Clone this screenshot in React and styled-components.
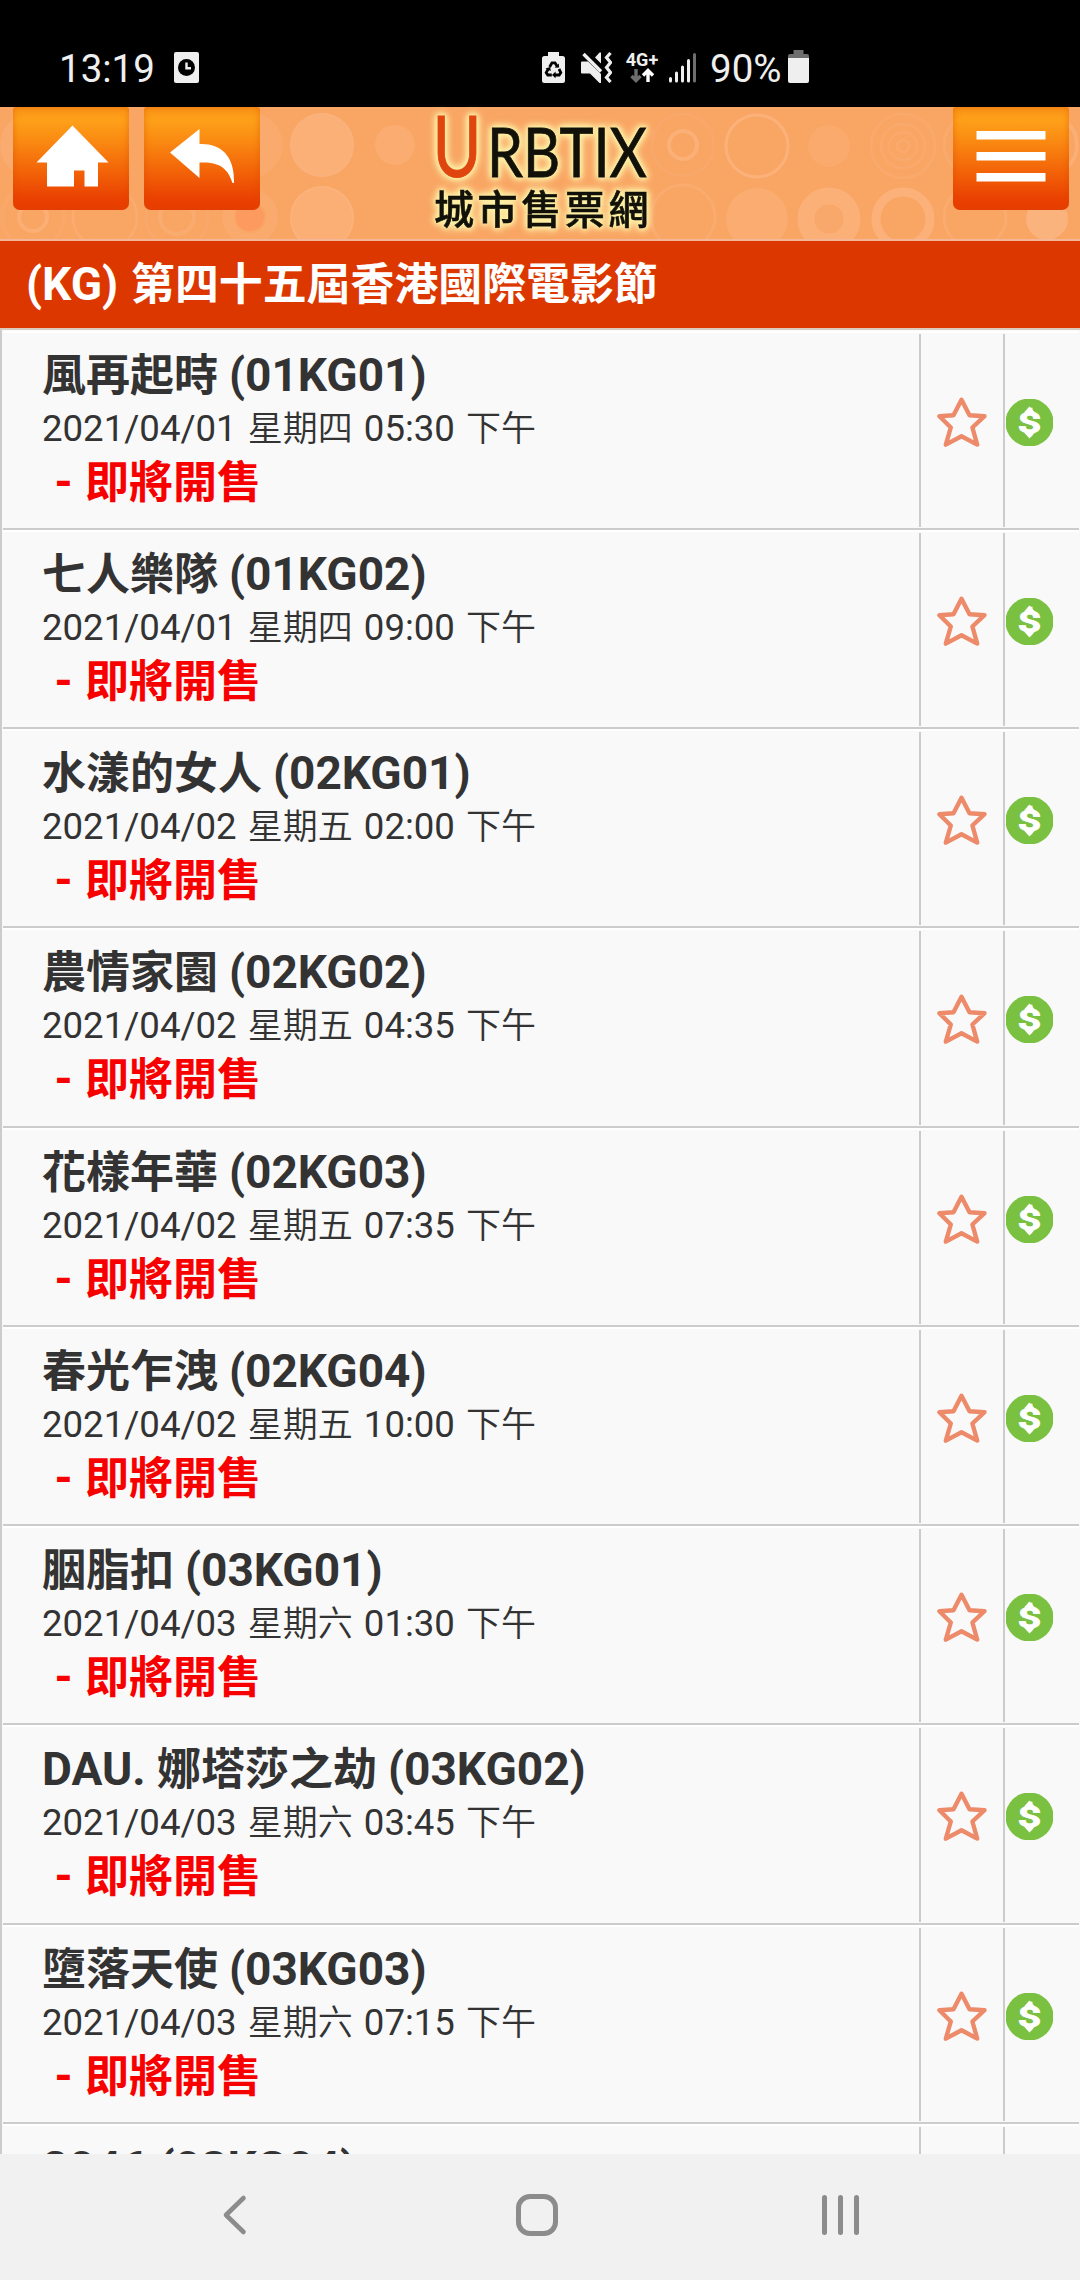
import React from 'react';
import styled, { createGlobalStyle } from 'styled-components';

const GlobalStyle = createGlobalStyle`
  * {
    box-sizing: border-box;
  }

  body {
    margin: 0;
    background: #f9f9f9;
    font-family: Roboto, "Noto Sans CJK TC", sans-serif;
  }
`;

const Screen = styled.div`
  display: flex;
  flex-direction: column;
  width: 1080px;
  height: 2280px;
  overflow: hidden;
  color: #333;
`;

const StatusBar = styled.div`
  display: flex;
  flex: none;
  align-items: flex-end;
  height: 107px;
  padding: 0 271px 24px 59px;
  background: #000;
  color: #efefef;

  svg {
    flex: none;
    display: block;
  }
`;

const StatusText = styled.span`
  font-size: 38.5px;
  line-height: 29px;
  white-space: nowrap;
  width: ${(props) => props.$width}px;
`;

const StatusIcons = styled.div`
  display: flex;
  align-items: flex-end;
  margin-left: auto;
`;

const NetworkType = styled.div`
  display: flex;
  flex-direction: column;
  align-items: center;
  width: 34px;
  margin: 0 10px 0 13px;
  font-size: 18px;
  font-weight: 700;
  line-height: 17px;
`;

const Header = styled.header`
  position: relative;
  display: flex;
  flex: none;
  align-items: flex-start;
  height: 134px;
  padding: 0 11px 0 13px;
  background: #f9a563;
  border-bottom: 2px solid #f3b698;
`;

const Pattern = styled.svg`
  position: absolute;
  left: 0;
  top: 0;
`;

const HeaderButton = styled.button`
  position: relative;
  width: 116px;
  height: 103px;
  margin: 0 15px 0 0;
  padding: 0;
  border: 0;
  border-radius: 3px 3px 7px 7px;
  background: linear-gradient(#fb9517 0%, #fea019 13%, #fa8a12 33%, #f36408 62%, #ea4202 88%, #e83c00 100%);
  box-shadow: inset 0 0 7px rgba(214, 70, 0, 0.45);

  &:last-child {
    margin: 0;
  }

  svg {
    display: block;
  }
`;

const Logo = styled.svg`
  position: relative;
  margin: 0 auto 0 133px;
  filter: drop-shadow(0 0 2px #fdf0a4) drop-shadow(0 0 3px #fdf0a4) drop-shadow(0 0 3px #fbe6a0);
`;

const PageTitle = styled.h1`
  flex: none;
  height: 89px;
  margin: 0;
  padding-left: 26px;
  border-bottom: 2px solid #dccabd;
  background: #dd3700;
  color: #fff;
  font-size: 43.9px;
  font-weight: 700;
  line-height: 86px;
  word-spacing: 2px;
`;

const List = styled.div`
  flex: 1;
  overflow: hidden;
  padding: 0.5px 1px 0 1px;
  border-left: 2px solid #ccc;
  background: #f9f9f9;
`;

const Row = styled.div`
  display: flex;
  height: 199.25px;
  padding: 1px 0;
  border-top: 2px solid #fff;
  border-bottom: 2px solid #ccc;
`;

const Details = styled.div`
  width: 916px;
  padding: 16px 0 0 39px;
`;

const Title = styled.h2`
  height: 51px;
  margin: 0;
  font-size: 44px;
  font-weight: 700;
  line-height: 51px;
  white-space: nowrap;
`;

// latin text runs a little larger than the chinese beside it
const Latin = styled.span`
  font-size: 46px;
`;

const ShowTime = styled.div`
  height: 50px;
  font-size: 36.6px;
  font-weight: 400;
  line-height: 50px;
  word-spacing: 2px;
  white-space: nowrap;
`;

const Light = styled.span`
  font-family: "Noto Sans CJK TC DemiLight", "Noto Sans CJK TC", sans-serif;
  font-size: 35px;
  font-weight: 350;
`;

const SaleStatus = styled.div`
  padding-left: 12.5px;
  color: #f80000;
  font-size: 44px;
  font-weight: 700;
  line-height: 62px;
  word-spacing: 1px;
`;

const IconCell = styled.div`
  width: ${(props) => props.$width}px;
  padding: ${(props) => props.$pad};
  border-left: 2px solid #ccc;

  svg {
    display: block;
  }
`;

const NavBar = styled.nav`
  display: flex;
  flex: none;
  align-items: center;
  justify-content: space-between;
  height: 126px;
  padding: 0 218px 4px 219px;
  background: #f1f1f1;

  svg {
    display: block;
  }
`;

const shows = [
  { name: '風再起時', code: '01KG01', date: '2021/04/01', day: '星期四', time: '05:30' },
  { name: '七人樂隊', code: '01KG02', date: '2021/04/01', day: '星期四', time: '09:00' },
  { name: '水漾的女人', code: '02KG01', date: '2021/04/02', day: '星期五', time: '02:00' },
  { name: '農情家園', code: '02KG02', date: '2021/04/02', day: '星期五', time: '04:35' },
  { name: '花樣年華', code: '02KG03', date: '2021/04/02', day: '星期五', time: '07:35' },
  { name: '春光乍洩', code: '02KG04', date: '2021/04/02', day: '星期五', time: '10:00' },
  { name: '胭脂扣', code: '03KG01', date: '2021/04/03', day: '星期六', time: '01:30' },
  { latin: 'DAU. ', name: '娜塔莎之劫', code: '03KG02', date: '2021/04/03', day: '星期六', time: '03:45' },
  { name: '墮落天使', code: '03KG03', date: '2021/04/03', day: '星期六', time: '07:15' },
  { latin: '2046', name: '', code: '03KG04' },
];

const HeaderPattern = () => (
  <Pattern width="1080" height="132" viewBox="0 0 1080 132" fill="none" stroke="#fcb582" strokeWidth="3">
    <g fill="#fcb582" stroke="none">
      <circle cx="33" cy="38" r="33" opacity=".4" />
      <circle cx="250" cy="38" r="33" opacity=".3" />
      <circle cx="322" cy="38" r="32" opacity=".65" />
      <circle cx="395" cy="38" r="20" opacity=".45" />
      <circle cx="322" cy="111" r="32" opacity=".6" />
      <circle cx="829" cy="39" r="21" opacity=".3" />
      <circle cx="757" cy="112" r="31" opacity=".45" />
      <circle cx="1047" cy="112" r="21" opacity=".85" />
    </g>
    <circle cx="33" cy="110" r="31" strokeWidth="5" opacity=".2" />
    <circle cx="33" cy="110" r="14" strokeWidth="4" opacity=".6" />
    <circle cx="105" cy="110" r="32" opacity=".4" />
    <circle cx="177" cy="110" r="31" opacity=".25" />
    <circle cx="177" cy="110" r="17" strokeWidth="4" opacity=".4" />
    <circle cx="250" cy="110" r="22" strokeWidth="12" opacity=".35" />
    <circle cx="250" cy="110" r="14" fill="#fc9a60" stroke="none" />
    <circle cx="322" cy="38" r="31" strokeWidth="2" opacity=".4" />
    <circle cx="322" cy="111" r="31" strokeWidth="2" opacity=".5" />
    <circle cx="683" cy="38" r="31" opacity=".25" />
    <circle cx="683" cy="38" r="14" strokeWidth="4" opacity=".7" />
    <circle cx="757" cy="39" r="31" opacity=".75" />
    <circle cx="903" cy="39" r="32" opacity=".28" />
    <circle cx="903" cy="39" r="22" opacity=".28" />
    <circle cx="903" cy="39" r="14" opacity=".28" />
    <circle cx="903" cy="39" r="6" opacity=".32" />
    <circle cx="975" cy="38" r="31" opacity=".3" />
    <circle cx="1047" cy="38" r="30" strokeWidth="4" opacity=".6" />
    <circle cx="683" cy="110" r="32" opacity=".4" />
    <circle cx="829" cy="112" r="23" strokeWidth="17" opacity=".7" />
    <circle cx="829" cy="112" r="14" fill="#fcb582" stroke="none" opacity=".25" />
    <circle cx="903" cy="112" r="27" strokeWidth="9" opacity=".75" />
    <circle cx="975" cy="110" r="31" opacity=".4" />
  </Pattern>
);

const StarIcon = () => (
  <svg width="50" height="51" viewBox="0 0 50 51" fill="none" stroke="#ed8a6a" strokeWidth="4.4" strokeLinejoin="round">
    <path d="M24.5 2.8 L32.5 18.2 L47.5 19.2 L35.4 30.5 L40.2 47.6 L24.5 39.2 L8.8 47.6 L13.8 30.5 L2.4 19.2 L16.5 18.2 Z" />
  </svg>
);

const DollarIcon = () => (
  <svg width="47" height="47" viewBox="0 0 47 47">
    <circle cx="23.5" cy="23.5" r="24" fill="#7ac142" />
    <path d="M23.5 7.5 L29 13.5 H18 Z M23.5 39.5 L29 33.5 H18 Z" fill="#fff" />
    <text
      x="23.5"
      y="34"
      fill="#fff"
      stroke="#fff"
      strokeWidth="0.7"
      fontFamily="Roboto, sans-serif"
      fontSize="30"
      fontWeight="700"
      textAnchor="middle"
      textLength="24"
      lengthAdjust="spacingAndGlyphs"
    >
      $
    </text>
  </svg>
);

const StatusBarIcons = () => (
  <StatusIcons>
    <svg width="23" height="31" viewBox="0 0 23 31">
      <path d="M6 0 H17 V4 H20.5 Q23 4 23 6.5 V28.5 Q23 31 20.5 31 H2.5 Q0 31 0 28.5 V6.5 Q0 4 2.5 4 H6 Z" fill="#efefef" />
      <g fill="none" stroke="#000" strokeWidth="2.8">
        <path d="M7.6 15 L10 10.8 H13 L15.2 14.4" />
        <path d="M17 17 L18.8 20.6 L17.2 23 H12.5" />
        <path d="M9.8 23 H5.8 L4.2 20.6 L6.4 16.8" />
      </g>
      <path d="M12.7 15.8 L17.2 15.6 L16.8 11.6 Z M13.6 19.6 V26.2 L10 23 Z M3.4 16.4 L8.2 15 L8.8 19 Z" fill="#000" />
    </svg>
    <svg width="31" height="31" viewBox="0 0 31 31" style={{ marginLeft: 16 }}>
      <path d="M0 10.5 Q0 9.5 1 9.5 H7 L20 22 V31 H18.5 L9 21.5 H1 Q0 21.5 0 20.5 Z M14 5.5 L18.5 0.5 H20 V11.5 Z" fill="#efefef" />
      <path d="M2.5 2 L20 19.5" stroke="#efefef" strokeWidth="3.4" />
      <path d="M29.5 1 L25.5 5.5 L29.5 10.5 L25.5 15.5 L29.5 20.5 L25.5 25.5 L29.5 30" fill="none" stroke="#efefef" strokeWidth="3.2" />
    </svg>
    <NetworkType>
      4G+
      <svg width="24" height="15" viewBox="0 0 24 15" fill="none" strokeWidth="3.4">
        <path d="M6 1 V12 M1.5 8 L6 12.5 L10.5 8" stroke="#6e6e6e" />
        <path d="M18 14 V3 M13 7.5 L18 2.5 L23 7.5" stroke="#fff" />
      </svg>
    </NetworkType>
    <svg width="27" height="30" viewBox="0 0 27 30" strokeWidth="3" strokeLinecap="round">
      <path d="M1.5 25.5 V28 M7.5 20 V28 M13.5 14 V28 M19.5 7.5 V28" stroke="#efefef" />
      <path d="M25.5 1.5 V28" stroke="#6e6e6e" />
    </svg>
    <StatusText $width={78} style={{ marginLeft: 14 }}>90%</StatusText>
    <svg width="21" height="33" viewBox="0 0 21 33">
      <path d="M5.5 0 H15.5 V4 H19 Q21 4 21 6 V9 H0 V6 Q0 4 2 4 H5.5 Z" fill="#6e6e6e" />
      <path d="M0 8 H21 V31 Q21 33 19 33 H2 Q0 33 0 31 Z" fill="#efefef" />
    </svg>
  </StatusIcons>
);

const ShowRow = ({ show }) => (
  <Row>
    <Details>
      <Title>
        {show.latin && <Latin>{show.latin}</Latin>}
        {show.name} <Latin>({show.code})</Latin>
      </Title>
      {show.date && (
        <>
          <ShowTime>
            {show.date} <Light>{show.day}</Light> {show.time} <Light>下午</Light>
          </ShowTime>
          <SaleStatus>
            <Latin>- </Latin>即將開售
          </SaleStatus>
        </>
      )}
    </Details>
    <IconCell $width={84} $pad="63px 0 0 16px">
      <StarIcon />
    </IconCell>
    <IconCell $width={76} $pad="65px 0 0 1px">
      <DollarIcon />
    </IconCell>
  </Row>
);

const App = () => {
  return (
    <Screen>
      <GlobalStyle />
      <StatusBar>
        <StatusText $width={115}>13:19</StatusText>
        <svg width="25" height="31" viewBox="0 0 25 31">
          <rect width="25" height="31" rx="2" fill="#efefef" />
          <circle cx="12.5" cy="15.5" r="8.5" fill="#000" />
          <path d="M12.5 10.5 V16.2 H17" fill="none" stroke="#efefef" strokeWidth="2.4" />
        </svg>
        <StatusBarIcons />
      </StatusBar>

      <Header>
        <HeaderPattern />
        <HeaderButton aria-label="home">
          <svg width="116" height="103" viewBox="0 0 116 103" fill="#fff">
            <path d="M59.5 18.5 L95.5 55.5 H85 V79.5 H71.5 V63.5 H61 V79.5 H34 V55.5 H23.5 Z" />
          </svg>
        </HeaderButton>
        <HeaderButton aria-label="back">
          <svg width="116" height="103" viewBox="0 0 116 103" fill="#fff">
            <path d="M26 45.5 L55.5 22 V37 C75 36 91 47 90 76 H88.5 C84 61 75 54.5 55.5 55.5 V71 Z" />
          </svg>
        </HeaderButton>
        <Logo width="260" height="132" viewBox="0 0 260 132" role="img" aria-label="URBTIX">
          <text x="24.5" y="70" fill="#e0450f" stroke="#e0450f" strokeWidth="1" fontFamily="Lato, sans-serif" fontSize="86" textLength="49" lengthAdjust="spacingAndGlyphs">U</text>
          <text x="79" y="69.5" fill="#11110a" stroke="#11110a" strokeWidth="0.8" fontFamily="Lato, sans-serif" fontSize="67" textLength="160" lengthAdjust="spacingAndGlyphs">RBTIX</text>
          <text x="26" y="117" fill="#11110a" stroke="#11110a" strokeWidth="0.6" fontFamily="'Noto Sans CJK TC', sans-serif" fontSize="40" fontWeight="500" letterSpacing="3.6">城市售票網</text>
        </Logo>
        <HeaderButton aria-label="menu">
          <svg width="116" height="103" viewBox="0 0 116 103" fill="#fff">
            <path d="M23.5 24 H92.5 V32.5 H23.5 Z M23.5 45 H92.5 V53.5 H23.5 Z M23.5 66 H92.5 V74.5 H23.5 Z" />
          </svg>
        </HeaderButton>
      </Header>

      <PageTitle>
        <Latin>(KG)</Latin> 第四十五屆香港國際電影節
      </PageTitle>

      <List>
        {shows.map((show) => (
          <ShowRow key={show.code} show={show} />
        ))}
      </List>

      <NavBar>
        <svg width="31" height="42" viewBox="0 0 31 42" fill="none" stroke="#8c8c8c" strokeWidth="4.6" strokeLinecap="round" strokeLinejoin="round">
          <path d="M24.5 4 L7 21 L24.5 38" />
        </svg>
        <svg width="46" height="42" viewBox="0 0 46 42" fill="none" stroke="#8c8c8c" strokeWidth="5">
          <rect x="6.5" y="2.5" width="37" height="37" rx="11.5" />
        </svg>
        <svg width="42" height="42" viewBox="0 0 42 42" stroke="#8c8c8c" strokeWidth="5" strokeLinecap="round">
          <path d="M4.5 3.5 V38.5 M20.5 3.5 V38.5 M36.5 3.5 V38.5" />
        </svg>
      </NavBar>
    </Screen>
  );
};

export default App;
